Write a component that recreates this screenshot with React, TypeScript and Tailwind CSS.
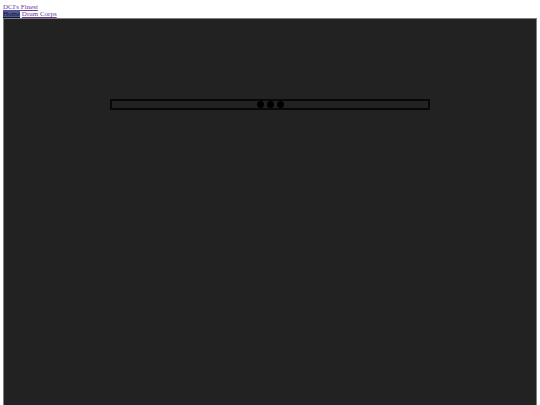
import React from 'react';

const links = [
  { label: 'Home', href: '#home', active: true },
  { label: 'Drum Corps', href: '#corps', active: false },
];

const App = () => {
  return (
    <div className="flex h-screen flex-col overflow-hidden px-[3px] pt-[3px] font-['Liberation_Serif',serif] text-[7px] leading-[8px]">
      <header>
        <a href="#top" className="block w-fit text-[#6a3a98] underline">
          DCI's Finest
        </a>
        <nav className="leading-[7px]">
          {links.map((link) => (
            <React.Fragment key={link.label}>
              <a
                href={link.href}
                className={link.active ? 'bg-[#50589c] text-[#15152f] underline' : 'text-[#6a3a98] underline'}
              >
                {link.label}
              </a>{' '}
            </React.Fragment>
          ))}
        </nav>
      </header>

      <main className="flex-1 border-x border-t border-[#808080] bg-[#222222] pt-20">
        <div className="mx-auto flex h-[11px] w-3/5 items-center justify-center gap-[3px] border-2 border-[#080808]">
          <span className="size-[7px] rounded-full bg-black" />
          <span className="size-[7px] rounded-full bg-black" />
          <span className="size-[7px] rounded-full bg-black" />
        </div>
      </main>
    </div>
  );
};

export default App;
